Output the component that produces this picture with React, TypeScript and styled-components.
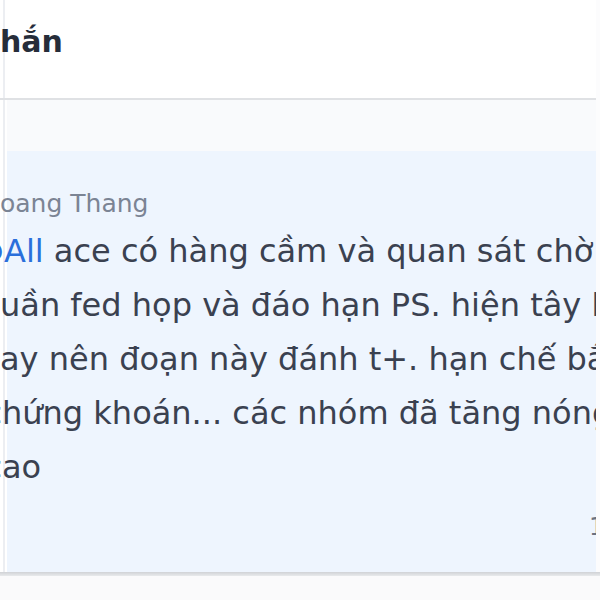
import React, { useLayoutEffect, useRef, useState } from "react";
import styled, { createGlobalStyle } from "styled-components";

const Global = createGlobalStyle`
  html, body { margin: 0; padding: 0; background: #ffffff; }
  body { font-family: "DejaVu Sans", "Noto Sans", sans-serif; overflow: hidden; }
  #root { width: 600px; height: 600px; }
`;

const Frame = styled.div`
  width: 600px;
  height: 600px;
  overflow: hidden;
  display: flex;
  flex-direction: column;
  position: relative;
  isolation: isolate;
  background: #ffffff;
  &::before {
    content: "";
    position: absolute;
    left: 3px;
    top: 0;
    bottom: 0;
    width: 2px;
    background: #eceef2;
    z-index: -1;
  }
`;

const TopRow = styled.div`
  flex: 1;
  display: flex;
  min-height: 0;
`;

const Main = styled.div`
  flex: 1;
  display: flex;
  flex-direction: column;
  overflow: hidden;
  min-width: 0;
`;

const Strip = styled.div`
  width: 4px;
  background: #fcfcfd;
`;

const Header = styled.header`
  flex: none;
  height: 100px;
  box-sizing: border-box;
  padding-top: 22px;
  border-bottom: 2px solid #dfe1e4;
`;

const Title = styled.h1`
  margin: 0;
  font-size: 30px;
  line-height: 40px;
  font-weight: 700;
  color: #262d3a;
  white-space: nowrap;
`;

const Pane = styled.div`
  flex: 1;
  margin-left: 7px;
  background: #f9fafc;
  padding-top: 51px;
  display: flex;
  flex-direction: column;
`;

const Bubble = styled.div`
  flex: 1;
  background: #eef5fe;
  display: flex;
  flex-direction: column;
`;

const Content = styled.div`
  margin-left: -7px;
  padding-top: 38px;
  display: flex;
  flex-direction: column;
`;

const Sender = styled.div`
  font-size: 25px;
  line-height: 30px;
  color: #7b8494;
  white-space: nowrap;
  margin-bottom: 5px;
`;

const Line = styled.div`
  font-size: 32px;
  line-height: 54px;
  color: #3a4150;
  white-space: nowrap;
`;

const Mention = styled.span`
  color: #2a6fdb;
`;

const Lead = styled.span``;

const Meta = styled.div`
  margin-top: 18px;
  padding-left: 589px;
  font-size: 24px;
  line-height: 30px;
  color: #6b7280;
  white-space: nowrap;
`;

const Footer = styled.div`
  height: 28px;
  flex: none;
  background: linear-gradient(#d0d2d6 0px, #dcdee1 2px, #e8eaec 4px, #fafafb 4px);
`;

function useShift(at: number) {
  const ref = useRef<HTMLSpanElement>(null);
  const [shift, setShift] = useState(0);
  useLayoutEffect(() => {
    const measure = () => {
      if (ref.current) setShift(at - ref.current.getBoundingClientRect().width);
    };
    measure();
    if (document.fonts && document.fonts.ready) document.fonts.ready.then(measure);
  }, [at]);
  return { ref, shift };
}

function ClippedTitle() {
  const { ref, shift } = useShift(0);
  return (
    <Title style={{ marginLeft: shift }}>
      <Lead ref={ref}>Tin n</Lead>hắn
    </Title>
  );
}

function ClippedSender({ lead, rest, at }: { lead: string; rest: string; at: number }) {
  const { ref, shift } = useShift(at);
  return (
    <Sender style={{ marginLeft: shift }}>
      <Lead ref={ref}>{lead}</Lead>
      {rest}
    </Sender>
  );
}

function MentionLine({ at }: { at: number }) {
  const { ref, shift } = useShift(at);
  return (
    <Line style={{ marginLeft: shift }}>
      <Mention>
        <Lead ref={ref}>@</Lead>All
      </Mention>{" "}
      ace có hàng cầm và quan sát chờ
    </Line>
  );
}

function TextLine({ lead, rest, at }: { lead: string; rest: string; at: number }) {
  const { ref, shift } = useShift(at);
  return (
    <Line style={{ marginLeft: shift }}>
      <Lead ref={ref}>{lead}</Lead>
      {rest}
    </Line>
  );
}

export default function App() {
  return (
    <>
      <Global />
      <Frame>
        <TopRow>
          <Main>
            <Header>
              <ClippedTitle />
            </Header>
            <Pane>
              <Bubble>
                <Content>
                  <ClippedSender lead="H" rest="oang Thang" at={0} />
                  <MentionLine at={4} />
                  <TextLine lead="t" rest="uần fed họp và đáo hạn PS. hiện tây bán" at={0} />
                  <TextLine lead="n" rest="ay nên đoạn này đánh t+. hạn chế bắt đáy" at={0} />
                  <TextLine lead="c" rest="hứng khoán... các nhóm đã tăng nóng" at={2} />
                  <TextLine lead="c" rest="ao" at={2} />
                  <Meta>10:30</Meta>
                </Content>
              </Bubble>
            </Pane>
          </Main>
          <Strip />
        </TopRow>
        <Footer />
      </Frame>
    </>
  );
}
